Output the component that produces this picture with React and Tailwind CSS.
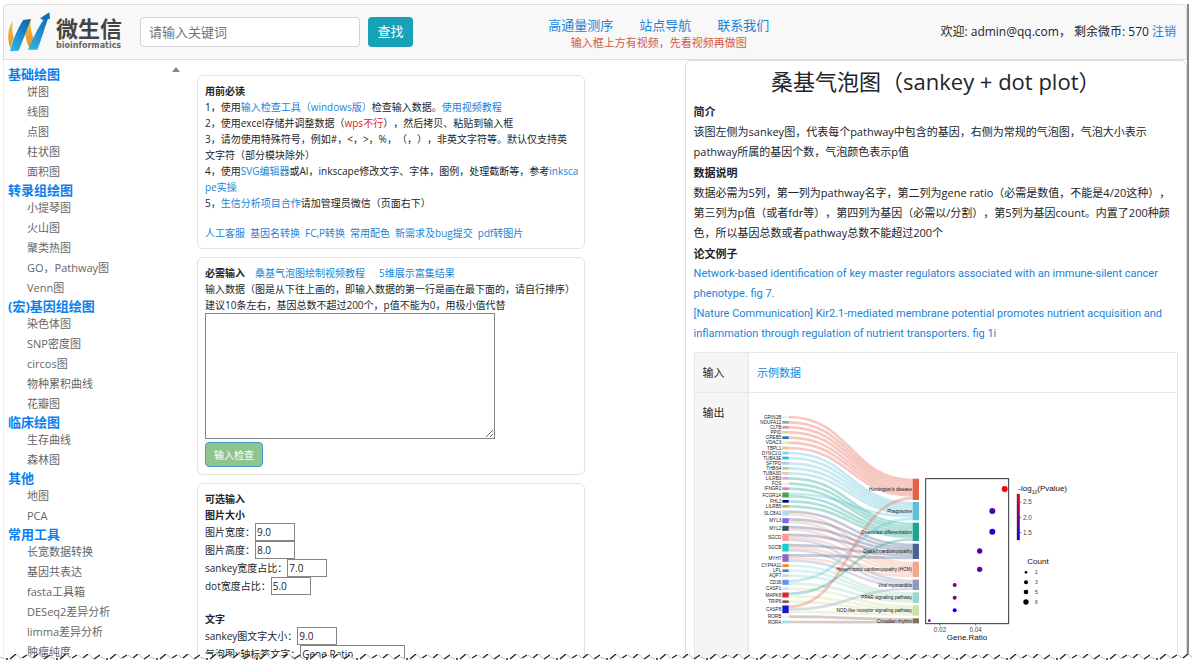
import React, { useState } from 'react';

const menu = [
  { title: '基础绘图', items: ['饼图', '线图', '点图', '柱状图', '面积图'] },
  { title: '转录组绘图', items: ['小提琴图', '火山图', '聚类热图', 'GO，Pathway图', 'Venn图'] },
  { title: '(宏)基因组绘图', items: ['染色体图', 'SNP密度图', 'circos图', '物种累积曲线', '花瓣图'] },
  { title: '临床绘图', items: ['生存曲线', '森林图'] },
  { title: '其他', items: ['地图', 'PCA'] },
  { title: '常用工具', items: ['长宽数据转换', '基因共表达', 'fasta工具箱', 'DESeq2差异分析', 'limma差异分析', '肿瘤纯度'] },
];

// name, center y, height, color, linked pathways (index)
const genes = [
  ['GRIN2B', 231, 8, '#e6f7f5', [0]],
  ['NDUFA12', 247, 8, '#96a3a8', [0]],
  ['CLTB', 262, 8, '#c49c94', [0]],
  ['PPID', 277, 8, '#d6dc8c', [0]],
  ['CREB5', 293, 8, '#1f77b4', [0]],
  ['VDAC3', 308, 8, '#ffe0b0', [0]],
  ['TBPL1', 324, 8, '#ffbb78', [0]],
  ['DYNC1I1', 339, 8, '#87ceeb', [1]],
  ['TUBA3E', 354, 8, '#17becf', [1]],
  ['SFTPD', 370, 8, '#aec7e8', [1]],
  ['THBS4', 385, 8, '#90e088', [1]],
  ['TUBA3D', 400, 8, '#f7b6d2', [1]],
  ['LILRB3', 415, 8, '#c5b0d5', [2]],
  ['FOS', 431, 8, '#fdf3ec', [2]],
  ['IFNGR2', 446, 8, '#e377c2', [2]],
  ['FCGR1A', 465, 15, '#3fa648', [1, 2]],
  ['FHL2', 484, 8, '#00008b', [2]],
  ['LILRB5', 499, 8, '#bcbd22', [2]],
  ['SLC8A1', 519, 15, '#add8e6', [3, 4]],
  ['MYL3', 542, 15, '#7b68ee', [3, 4]],
  ['MYL2', 565, 15, '#2f5357', [3, 4]],
  ['SGCD', 592, 22, '#ff9896', [3, 4, 5]],
  ['SGCB', 623, 23, '#0fd0d2', [3, 4, 5]],
  ['MYH7', 654, 23, '#9467bd', [3, 4, 5]],
  ['CYP4A11', 677, 8, '#ff7f0e', [6]],
  ['LPL', 692, 8, '#1e90ff', [6]],
  ['AQP7', 707, 8, '#d3d3d3', [6]],
  ['CD36', 727, 15, '#6495ed', [1, 6]],
  ['CASP1', 746, 8, '#e0e0e0', [7]],
  ['MAPK8', 765, 15, '#d62728', [2, 7]],
  ['TRIP6', 785, 8, '#8c564b', [7]],
  ['CASP8', 808, 23, '#1414cc', [0, 5, 7]],
  ['RORB', 830, 8, '#faf0e0', [8]],
  ['RORA', 846, 8, '#98dfe8', [8]],
];

const pathways = [
  { name: "Huntington's disease", top: 416, bottom: 480, color: '#e8604c' },
  { name: 'Phagosome', top: 486, bottom: 541, color: '#5bc0d8' },
  { name: 'Osteoclast differentiation', top: 548, bottom: 603, color: '#1aa592' },
  { name: 'Dilated cardiomyopathy', top: 611, bottom: 657, color: '#4d6196' },
  { name: 'Hypertrophic cardiomyopathy (HCM)', top: 665, bottom: 711, color: '#f5a58c' },
  { name: 'Viral myocarditis', top: 719, bottom: 750, color: '#8d9abf' },
  { name: 'PPAR signaling pathway', top: 757, bottom: 789, color: '#9bdac8' },
  { name: 'NOD-like receptor signaling pathway', top: 796, bottom: 827, color: '#cde2a0' },
  { name: 'Circadian rhythm', top: 835, bottom: 850, color: '#8a6a58' },
];

const dots = [
  [962, 447, 9, '#ff0000'],
  [925, 513, 9, '#5000a8'],
  [925, 575, 9, '#1c00e0'],
  [887, 633, 8, '#4a00b4'],
  [887, 688, 8, '#5f00a0'],
  [812, 735, 6, '#80007f'],
  [812, 773, 6, '#85007a'],
  [812, 811, 6, '#0000ff'],
  [736, 842, 4, '#700090'],
];

const counts = [
  [2, 697, 4],
  [3, 727, 6],
  [5, 756, 7],
  [6, 786, 8],
];

const buildLinks = () => {
  const used = pathways.map(() => 0);
  const links = [];
  genes.forEach(([name, y, h, , targets]) => {
    const step = h / targets.length;
    targets.forEach((t, i) => {
      const y1 = y - h / 2 + step * (i + 0.5);
      const y2 = pathways[t].top + 8 * 0.97 * (used[t] + 0.5);
      used[t] += 1;
      links.push({
        key: `${name}-${t}`,
        d: `M313 ${y1} C500 ${y1} 500 ${y2} 686 ${y2}`,
        color: pathways[t].color,
      });
    });
  });
  return links;
};

const Link = ({ children, className = '' }) => (
  <a href="#" className={`text-[#1a83d8] ${className}`}>{children}</a>
);

const Logo = () => (
  <a href="#" className="flex items-center gap-1.5" aria-label="微生信">
    <svg width="42" height="40" viewBox="0 0 126 120">
      <defs>
        <linearGradient id="blue" x1="0" y1="1" x2="0.6" y2="0">
          <stop offset="0" stopColor="#35b6e8" />
          <stop offset="1" stopColor="#0b6fb8" />
        </linearGradient>
        <linearGradient id="gold" x1="0" y1="0" x2="0" y2="1">
          <stop offset="0" stopColor="#f6c04a" />
          <stop offset="1" stopColor="#e8901e" />
        </linearGradient>
      </defs>
      <path d="M15 27 C-2 48 -3 82 7 108 L17 76 C12 60 12 42 15 27Z" fill="url(#gold)" />
      <path d="M52 22 L68 22 C66 50 72 74 84 90 L68 113 C52 92 48 54 52 22Z" fill="url(#gold)" />
      <path d="M6 118 C14 84 30 46 46 24 L69 21 C56 54 44 88 32 116 Z" fill="url(#blue)" />
      <path d="M60 113 C74 80 90 48 106 25 L96 19 L124 1 L126 22 L120 20 C108 52 100 84 88 113 Z" fill="url(#blue)" />
    </svg>
    <span className="flex flex-col">
      <span className="text-[22px] leading-7 font-bold text-[#444]">微生信</span>
      <span className="font-['DejaVu_Sans'] text-[8px] leading-2 font-bold text-[#666]">bioinformatics</span>
    </span>
  </a>
);

const Header = () => {
  const [keyword, setKeyword] = useState('');

  return (
    <header className="flex h-14 shrink-0 items-center rounded-t border border-[#ddd] bg-[#f8f8f8] pr-2.5 pl-1">
      <Logo />
      <form className="ml-[18px] flex gap-2" onSubmit={(e) => e.preventDefault()}>
        <input
          type="text"
          aria-label="关键词"
          value={keyword}
          onChange={(e) => setKeyword(e.target.value)}
          placeholder="请输入关键词"
          className="h-[30px] w-[220px] rounded-sm border border-[#ced4da] bg-white px-2 text-[13px] placeholder:text-[#6c757d]"
        />
        <button className="h-[30px] w-[45px] rounded-sm bg-[#17a2b8] text-[13px] text-white">查找</button>
      </form>
      <div className="flex flex-1 flex-col items-center pt-1 pr-9">
        <nav className="flex gap-[26px] text-[13px] leading-[18px]">
          <Link>高通量测序</Link>
          <Link>站点导航</Link>
          <Link>联系我们</Link>
        </nav>
        <p className="text-[11px] leading-[18px] text-[#d05a48]">输入框上方有视频，先看视频再做图</p>
      </div>
      <p className="text-xs">
        欢迎: admin@qq.com， 剩余微币: 570 <Link>注销</Link>
      </p>
    </header>
  );
};

const Sidebar = () => (
  <aside className="flex w-[194px] shrink-0 border-l border-[#eee] pt-1.5 pl-1">
    <nav className="w-[163px]">
      {menu.map((group) => (
        <section key={group.title}>
          <h2 className="text-[13px] leading-4 font-bold text-[#0b7ff0]">{group.title}</h2>
          <ul className="pl-[19px] text-[11px] leading-5">
            {group.items.map((item) => (
              <li key={item}><a href="#" className="text-[#666]">{item}</a></li>
            ))}
          </ul>
        </section>
      ))}
    </nav>
    <div className="w-3">
      <svg width="10" height="10" viewBox="0 0 10 10"><path d="M1 6 L5 1 L9 6Z" fill="#888" /></svg>
    </div>
  </aside>
);

const Card = ({ children }) => (
  <section className="rounded-md border border-[#e2e2e2] py-[7px] pr-[3px] pl-[7px]">{children}</section>
);

const Field = ({ label, value, width = 'w-10' }) => (
  <div className="flex h-[18px] items-center">
    <label className="flex items-center">
      {label}：
      <input type="text" defaultValue={value} className={`h-[18px] border border-[#858585] px-px ${width}`} />
    </label>
  </div>
);

const Forms = () => (
  <div className="flex min-w-0 flex-col gap-2 pt-[15px] text-[10px] leading-4">
    <Card>
      <h3 className="font-bold">用前必读</h3>
      <div className="break-all">
        <p>1，使用<Link>输入检查工具（windows版）</Link>检查输入数据。<Link>使用视频教程</Link></p>
        <p>2，使用excel存储并调整数据（<span className="text-[#d9232e]">wps不行</span>），然后拷贝、粘贴到输入框</p>
        <p>
          3，请勿使用特殊符号，例如#，&lt;，&gt;，%，（，），非英文字符等。默认仅支持英
          <br />
          文字符（部分模块除外）
        </p>
        <p>4，使用<Link>SVG编辑器</Link>或AI，inkscape修改文字、字体，图例，处理截断等，参考<Link>inkscape实操</Link></p>
        <p>5，<Link>生信分析项目合作</Link>请加管理员微信（页面右下）</p>
      </div>
      <p className="mt-3.5 flex gap-[5px]">
        <Link>人工客服</Link>
        <Link>基因名转换</Link>
        <Link>FC,P转换</Link>
        <Link>常用配色</Link>
        <Link>新需求及bug提交</Link>
        <Link>pdf转图片</Link>
      </p>
    </Card>

    <Card>
      <h3 className="flex gap-2.5">
        <span className="font-bold">必需输入</span>
        <Link>桑基气泡图绘制视频教程</Link>
        <Link className="ml-1">5维展示富集结果</Link>
      </h3>
      <label htmlFor="data" className="block">
        输入数据（图是从下往上画的，即输入数据的第一行是画在最下面的，请自行排序）
        <br />
        建议10条左右，基因总数不超过200个，p值不能为0，用极小值代替
      </label>
      <textarea id="data" className="block h-[126px] w-[290px] border border-[#858585]" />
      <button className="mt-[3px] block h-[25px] w-[58px] rounded-sm border border-[#3f9fc8] bg-[#8fc48f] text-[10px] text-white">
        输入检查
      </button>
    </Card>

    <Card>
      <h3 className="font-bold">可选输入</h3>
      <h4 className="font-bold">图片大小</h4>
      <Field label="图片宽度" value="9.0" />
      <Field label="图片高度" value="8.0" />
      <Field label="sankey宽度占比" value="7.0" />
      <Field label="dot宽度占比" value="5.0" />
      <h4 className="mt-4 font-bold">文字</h4>
      <Field label="sankey图文字大小" value="9.0" />
      <Field label="气泡图x轴标签文字" value="Gene.Ratio" width="w-[105px]" />
    </Card>
  </div>
);

const SankeyPlot = () => (
  <svg width="412" height="240" viewBox="219 189 1236 720" fontFamily="Liberation Sans, Arial, sans-serif">
    <g fill="none" strokeWidth="8" opacity="0.9">
      {buildLinks().map((l) => (
        <path key={l.key} d={l.d} stroke={l.color} strokeOpacity="0.38" />
      ))}
    </g>
    {genes.map(([name, y, h, color]) => (
      <g key={name}>
        <rect x="295" y={y - h / 2} width="19" height={h} fill={color} />
        <text x="292" y={y + 5} fontSize="14" textAnchor="end" fill="#222">{name}</text>
      </g>
    ))}
    {pathways.map((p) => (
      <g key={p.name}>
        <rect x="686" y={p.top} width="19" height={p.bottom - p.top} fill={p.color} />
        <text x="684" y={(p.top + p.bottom) / 2 + 5} fontSize="14" textAnchor="end" fill="#111">{p.name}</text>
      </g>
    ))}

    <rect x="725" y="416" width="249" height="435" fill="#fff" stroke="#333" strokeWidth="3" />
    {dots.map(([x, y, r, color]) => (
      <circle key={y} cx={x} cy={y} r={r} fill={color} />
    ))}
    <path d="M768 851v6M875 851v6" stroke="#333" strokeWidth="2" />
    <g fontSize="19" textAnchor="middle" fill="#444">
      <text x="768" y="875">0.02</text>
      <text x="875" y="875">0.04</text>
      <text x="849" y="901" fontSize="24" fill="#111">Gene.Ratio</text>
    </g>

    {/* legends */}
    <text x="1003" y="453" fontSize="24" fill="#111">
      -log<tspan fontSize="15" dy="8">10</tspan><tspan dy="-8">(Pvalue)</tspan>
    </text>
    <defs>
      <linearGradient id="pvalue" x1="0" y1="0" x2="0" y2="1">
        <stop offset="0" stopColor="#ff0000" />
        <stop offset="0.5" stopColor="#80007f" />
        <stop offset="1" stopColor="#0000ff" />
      </linearGradient>
    </defs>
    <rect x="999" y="462" width="8" height="138" fill="url(#pvalue)" stroke="#222" strokeWidth="1" />
    <path d="M1007 487h5M1007 532h5M1007 578h5" stroke="#222" strokeWidth="2" />
    <g fontSize="19" fill="#444">
      <text x="1017" y="493">2.5</text>
      <text x="1017" y="539">2.0</text>
      <text x="1017" y="585">1.5</text>
    </g>
    <text x="1062" y="671" fontSize="24" textAnchor="middle" fill="#111">Count</text>
    {counts.map(([n, y, r]) => (
      <g key={n}>
        <circle cx="1026" cy={y} r={r} />
        <text x="1053" y={y + 5} fontSize="15" fill="#333">{n}</text>
      </g>
    ))}
  </svg>
);

const Intro = () => (
  <article className="min-w-0 rounded-t-md border border-[#ddd] px-2 text-[11px] leading-5">
    <h1 className="py-0.5 text-center text-[22px] leading-9 font-normal">桑基气泡图（sankey + dot plot）</h1>
    <h3 className="leading-[21px] font-bold">简介</h3>
    <p>该图左侧为sankey图，代表每个pathway中包含的基因，右侧为常规的气泡图，气泡大小表示pathway所属的基因个数，气泡颜色表示p值</p>
    <h3 className="leading-[21px] font-bold">数据说明</h3>
    <p>数据必需为5列，第一列为pathway名字，第二列为gene ratio（必需是数值，不能是4/20这种），第三列为p值（或者fdr等），第四列为基因（必需以/分割），第5列为基因count。内置了200种颜色，所以基因总数或者pathway总数不能超过200个</p>
    <h3 className="leading-[21px] font-bold">论文例子</h3>
    <div className="font-['Roboto',sans-serif]">
      <p><Link>Network-based identification of key master regulators associated with an immune-silent cancer phenotype. fig 7.</Link></p>
      <p><Link>[Nature Communication] Kir2.1-mediated membrane potential promotes nutrient acquisition and inflammation through regulation of nutrient transporters. fig 1i</Link></p>
    </div>

    <table className="mt-2 w-full border-collapse">
      <tbody>
        <tr>
          <th className="h-10 w-[55px] border border-[#e6e6e6] bg-[#f5f5f5] px-2 text-left font-normal">输入</th>
          <td className="border border-[#e6e6e6] px-2"><Link>示例数据</Link></td>
        </tr>
        <tr>
          <th className="h-72 border border-[#e6e6e6] bg-[#f5f5f5] px-2 py-2.5 text-left align-top font-normal">输出</th>
          <td className="border border-[#e6e6e6] px-2 py-2.5 align-top"><SankeyPlot /></td>
        </tr>
      </tbody>
    </table>
  </article>
);

const TornEdge = () => (
  <svg className="absolute bottom-0 left-0 h-3 w-full" aria-hidden="true">
    <defs>
      <pattern id="torn" width="50" height="12" patternUnits="userSpaceOnUse">
        <path d="M0 3 L3 5 L8 5 L11 5 L16 0 L21 5 L27 1 L33 4 L38 0 L44 5 L50 1 V12 H0Z" fill="#fff" />
        <path d="M0 3 L5 5 M17 0 L21 5 M28 1 L32 4 M39 0 L43 5" fill="none" stroke="#bbb" strokeWidth="1" />
        <path d="M6 5 H8 M10 5 L16 0 M22 4 L27 1 M33 4 L38 0 M44 5 L50 1" fill="none" stroke="#222" strokeWidth="1.4" />
      </pattern>
    </defs>
    <rect width="100%" height="12" fill="url(#torn)" />
  </svg>
);

const App = () => (
  <div className="relative flex h-screen flex-col overflow-hidden bg-white pt-1 pr-[3px] pl-[3px] font-['Open_Sans','Noto_Sans_CJK_SC',sans-serif] text-[#212529] [text-spacing-trim:space-all]">
    <div className="flex min-h-0 flex-1 flex-col border-r-2 border-[#888]">
      <Header />
      <main className="flex min-h-0 flex-1">
        <Sidebar />
        <div className="grid min-w-0 flex-1 grid-cols-[388fr_503fr] gap-[100px]">
          <Forms />
          <Intro />
        </div>
      </main>
    </div>
    <TornEdge />
  </div>
);

export default App;
